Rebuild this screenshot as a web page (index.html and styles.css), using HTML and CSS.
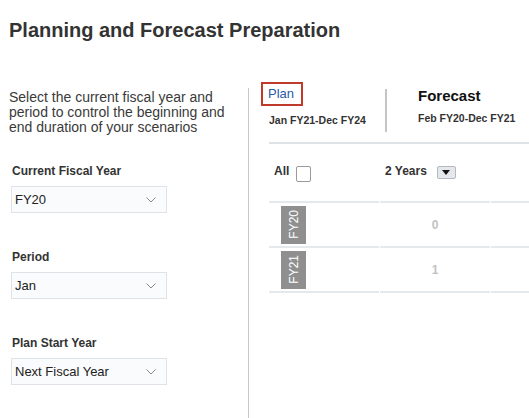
FILE: index.html
```html
<!DOCTYPE html>
<html>
<head>
<meta charset="utf-8">
<link rel="stylesheet" href="styles.css">
</head>
<body>
<h1 class="title">Planning and Forecast Preparation</h1>
<div class="main">
  <div class="left">
    <p class="intro">Select the current fiscal year and period to control the beginning and end duration of your scenarios</p>
    <div class="field">
      <div class="label">Current Fiscal Year</div>
      <div class="select"><span>FY20</span><svg class="chev" width="10" height="6" viewBox="0 0 10 6"><path d="M0.5 0.5 L5 5 L9.5 0.5" fill="none" stroke="#8a8a8a" stroke-width="1"/></svg></div>
    </div>
    <div class="field">
      <div class="label">Period</div>
      <div class="select"><span>Jan</span><svg class="chev" width="10" height="6" viewBox="0 0 10 6"><path d="M0.5 0.5 L5 5 L9.5 0.5" fill="none" stroke="#8a8a8a" stroke-width="1"/></svg></div>
    </div>
    <div class="field">
      <div class="label">Plan Start Year</div>
      <div class="select"><span>Next Fiscal Year</span><svg class="chev" width="10" height="6" viewBox="0 0 10 6"><path d="M0.5 0.5 L5 5 L9.5 0.5" fill="none" stroke="#8a8a8a" stroke-width="1"/></svg></div>
    </div>
  </div>
  <div class="right">
    <div class="tabs">
      <div class="tab tab-plan">
        <div class="tab-link">Plan</div>
        <div class="tab-range">Jan FY21-Dec FY24</div>
      </div>
      <div class="tab-sep"></div>
      <div class="tab tab-forecast">
        <div class="tab-title">Forecast</div>
        <div class="tab-range2">Feb FY20-Dec FY21</div>
      </div>
    </div>
    <div class="content">
      <div class="toolbar">
        <div class="all-group"><span class="tb-text">All</span><span class="checkbox"></span></div>
        <div class="years-group"><span class="tb-text">2 Years</span><span class="dd-btn"><svg width="8" height="5" viewBox="0 0 8 5"><path d="M0 0 H8 L4 5 Z" fill="#111"/></svg></span></div>
      </div>
      <div class="grid">
        <div class="cell first"><span class="badge"><span class="badge-text">FY20</span></span></div>
        <div class="cell first val">0</div>
        <div class="cell first"></div>
        <div class="cell"><span class="badge"><span class="badge-text">FY21</span></span></div>
        <div class="cell val">1</div>
        <div class="cell"></div>
      </div>
    </div>
  </div>
</div>
</body>
</html>
```
FILE: styles.css
```css
* { box-sizing: border-box; }
html, body { margin: 0; padding: 0; background: #fff; }
body {
  font-family: "Liberation Sans", Arial, sans-serif;
  color: #333;
  width: 529px;
  height: 418px;
  overflow: hidden;
}
.title {
  margin: 19px 0 0 9px;
  font-size: 20px;
  line-height: 23px;
  font-weight: bold;
  color: #333;
}
.main {
  display: flex;
  margin-top: 38px;
}
.left {
  width: 249px;
  margin-top: 8px;
  min-height: 340px;
  border-right: 1px solid #c8c8c8;
  padding: 2px 0 0 9px;
}
.intro {
  margin: 0 0 29px 0;
  width: 232px;
  font-size: 14px;
  line-height: 15px;
  color: #3a3a3a;
}
.field { margin-bottom: 37px; }
.label {
  margin-left: 3px;
  font-size: 12px;
  line-height: 14px;
  font-weight: bold;
  color: #333;
  margin-bottom: 8px;
}
.select {
  margin-left: 2px;
  width: 156px;
  height: 27px;
  border: 1px solid #dfe3e8;
  background: #fafbfc;
  display: flex;
  align-items: center;
  justify-content: space-between;
  padding: 0 10px 0 3px;
  font-size: 13px;
  color: #222;
}
.chev { display: block; margin-top: 1px; }
.right {
  flex: 1;
  padding-top: 2px;
}
.tabs {
  display: flex;
  align-items: flex-start;
  padding-left: 12px;
}
.tab-plan { width: 124px; }
.tab-link {
  display: inline-block;
  border: 2px solid #c0392b;
  height: 24px;
  line-height: 20px;
  padding: 0 7px 0 5px;
  font-size: 13px;
  color: #2a5aa8;
}
.tab-range {
  margin: 8px 0 0 8px;
  font-size: 10.5px;
  line-height: 12px;
  font-weight: bold;
  color: #333;
}
.tab-sep {
  width: 2px;
  height: 43px;
  margin-top: 7px;
  background: #c4c4c4;
}
.tab-forecast { margin-left: 31px; padding-top: 5px; }
.tab-title {
  font-size: 15px;
  line-height: 17px;
  font-weight: bold;
  color: #111;
}
.tab-range2 {
  margin-top: 8px;
  font-size: 10.5px;
  line-height: 12px;
  font-weight: bold;
  color: #333;
}
.content {
  margin: 10px 0 0 20px;
  border-top: 2px solid #dde2e8;
}
.toolbar {
  display: flex;
  align-items: flex-start;
  margin-top: 20px;
  height: 37px;
}
.all-group {
  width: 116px;
  padding-left: 5px;
  display: flex;
  align-items: flex-start;
}
.years-group {
  display: flex;
  align-items: flex-start;
}
.tb-text {
  font-size: 12px;
  line-height: 14px;
  font-weight: bold;
  color: #333;
}
.checkbox {
  width: 15px;
  height: 16px;
  margin: 2px 0 0 7px;
  border: 1px solid #9a9a9a;
  border-radius: 2px;
  background: #fff;
}
.dd-btn {
  width: 19px;
  height: 13px;
  margin: 2px 0 0 10px;
  border: 1px solid #b4b9bf;
  border-radius: 2px;
  background: #e4e8ec;
  display: flex;
  align-items: center;
  justify-content: center;
}
.dd-btn svg { display: block; }
.grid {
  display: grid;
  grid-template-columns: 110px 110px 1fr;
  column-gap: 1px;
}
.cell {
  height: 45px;
  border-bottom: 2px solid #e6e9ec;
  display: flex;
  align-items: center;
}
.cell.first {
  height: 47px;
  border-top: 2px solid #e6e9ec;
}
.badge {
  margin-left: 12px;
  width: 25px;
  height: 38px;
  background: #8f8f8f;
  display: flex;
  align-items: center;
  justify-content: center;
}
.badge-text {
  writing-mode: vertical-rl;
  transform: rotate(180deg);
  font-size: 12px;
  line-height: 12px;
  color: #fff;
}
.val {
  justify-content: center;
  font-size: 12px;
  font-weight: bold;
  color: #c2c2c2;
}
```
